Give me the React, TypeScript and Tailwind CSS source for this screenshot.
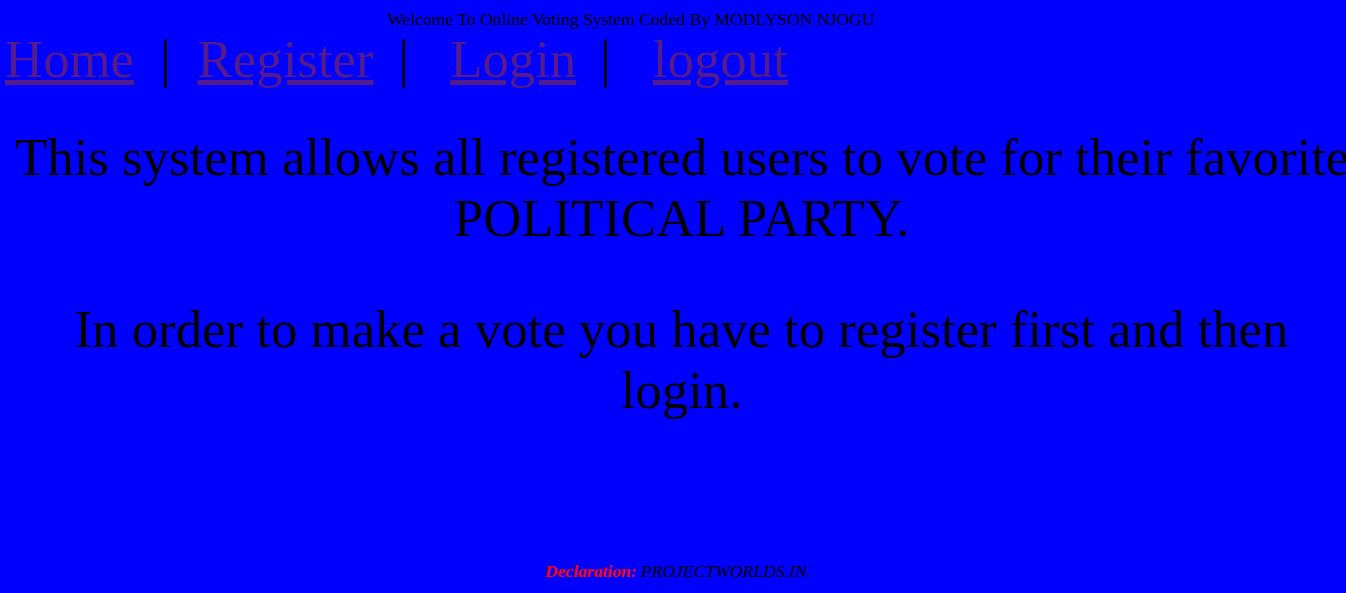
export default function App() {
  return (
    <div className="h-[593px] w-full overflow-hidden bg-[#0000ff] text-black font-['Liberation_Serif',serif]">
      <div className="pt-[10px] text-center text-[17.6px] leading-[19px] pr-[84px]">
        Welcome To Online Voting System Coded By MODLYSON NJOGU
      </div>

      <div className="flex items-baseline pl-[5px] text-[52.8px] leading-[60px] whitespace-nowrap">
        <a href="#" className="text-[#551a8b] underline">Home</a>
        <span className="ml-[26px] mr-[27px]">|</span>
        <a href="#" className="text-[#551a8b] underline">Register</a>
        <span className="ml-[25px] mr-[41px]">|</span>
        <a href="#" className="text-[#551a8b] underline">Login</a>
        <span className="ml-[24px] mr-[42px]">|</span>
        <a href="#" className="text-[#551a8b] underline">logout</a>
      </div>

      <div className="ml-[15px] w-[1333px] mt-[38px] text-center text-[52.8px] leading-[61px] whitespace-nowrap">
        <p>
          This system allows all registered users to vote for their favorite
          <br />
          POLITICAL PARTY.
        </p>
        <p className="mt-[50px]">
          In order to make a vote you have to register first and then
          <br />
          login.
        </p>
      </div>

      <div className="mt-[137px] text-center text-[17.6px] italic pl-[10px]">
        <b className="text-[#ff0000]">Declaration:</b> PROJECTWORLDS.IN.
      </div>
    </div>
  );
}
